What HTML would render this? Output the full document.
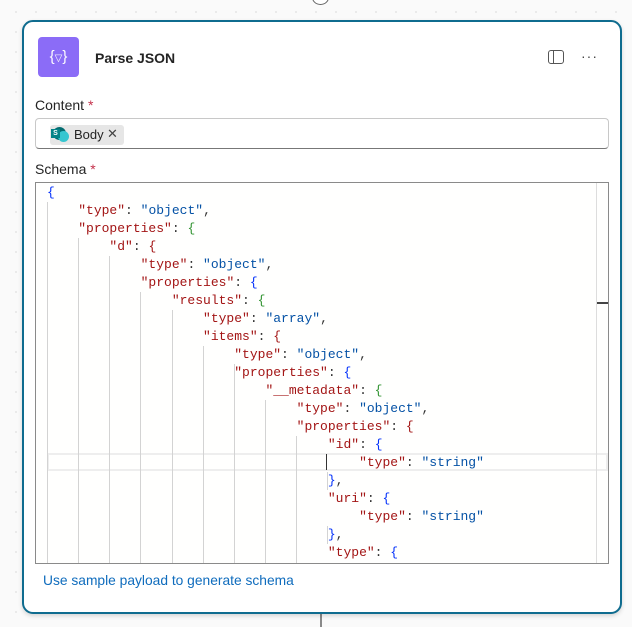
<!DOCTYPE html>
<html><head><style>
*{margin:0;padding:0;box-sizing:border-box}
body{width:632px;height:627px;overflow:hidden;background:#fafafa;background-image:radial-gradient(#e0e0e0 0.7px,transparent 1px);background-size:20px 20px;background-position:6px 2px;font-family:"Liberation Sans",sans-serif;position:relative}
.card{position:absolute;left:22px;top:20px;width:600px;height:594px;border:2px solid #0f6c8f;border-radius:11px;background:#fff;box-shadow:0 2px 4px rgba(0,0,0,.15)}
.abs{position:absolute}
.code{position:absolute;left:35px;top:182px;width:574px;height:382px;border:1px solid #8a8a8a;background:#fffffe;overflow:hidden;font-family:"Liberation Mono",monospace;font-size:13px}
.ln{position:absolute;left:11px;white-space:pre;line-height:18px;height:18px;color:#333}
.k{color:#a31515}.s{color:#0451a5}.b{color:#0431fa}.g{color:#319331}.r{color:#a31515}
.gd{position:absolute;width:1px;background:#d3d3d3}
</style></head><body>
<div class="abs" style="left:312px;top:-10px;width:17px;height:15px;border:1px solid #666;border-radius:50%;background:#fff"></div>
<div class="abs" style="left:320px;top:613px;width:2px;height:14px;background:#8a8a8a"></div>
<div class="card"></div>
<div class="abs" style="left:38px;top:37px;width:41px;height:40px;background:#8b6cf7;border-radius:4px;color:#fff;font-size:15px;text-align:center;line-height:40px">{<span style="font-size:10px">▽</span>}</div>
<div class="abs" style="left:95px;top:50px;font-size:14px;font-weight:bold;color:#242424">Parse JSON</div>
<div class="abs" style="left:548px;top:50px;width:16px;height:14px;border:1.3px solid #555;border-radius:3px"></div>
<div class="abs" style="left:553px;top:51px;width:1.3px;height:12px;background:#555"></div>
<div class="abs" style="left:581px;top:48px;font-size:14px;color:#444;letter-spacing:1px">···</div>
<div class="abs" style="left:35px;top:97px;font-size:14px;color:#242424">Content <span style="color:#c4314b">*</span></div>
<div class="abs" style="left:35px;top:118px;width:574px;height:31px;border:1px solid #c8c8c8;border-bottom-color:#777;border-radius:4px"></div>
<div class="abs" style="left:50px;top:125px;width:74px;height:20px;background:#e6e6e6;border-radius:3px"></div>
<div class="abs" style="left:53px;top:127px;width:13px;height:13px;border-radius:50%;background:#036c70"></div>
<div class="abs" style="left:58px;top:131px;width:11px;height:11px;border-radius:50%;background:#37c6d0"></div>
<div class="abs" style="left:51px;top:129px;width:9px;height:9px;background:#038387;color:#fff;font-size:7px;font-weight:bold;text-align:center;line-height:9px">S</div>
<div class="abs" style="left:74px;top:127px;font-size:13px;color:#242424">Body</div>
<div class="abs" style="left:107px;top:126px;font-size:13px;color:#444">✕</div>
<div class="abs" style="left:35px;top:161px;font-size:14px;color:#242424">Schema <span style="color:#c4314b">*</span></div>
<div class="code">
<div class="abs" style="left:11px;top:270px;width:561px;height:18px;border:2px solid #eee"></div>
<div class="abs" style="left:290px;top:271px;width:1px;height:16px;background:#333"></div>
<div class="gd" style="left:11px;top:19px;height:370px"></div>
<div class="gd" style="left:42px;top:55px;height:330px"></div>
<div class="gd" style="left:73px;top:73px;height:310px"></div>
<div class="gd" style="left:104px;top:109px;height:280px"></div>
<div class="gd" style="left:136px;top:127px;height:260px"></div>
<div class="gd" style="left:167px;top:163px;height:220px"></div>
<div class="gd" style="left:198px;top:181px;height:200px"></div>
<div class="gd" style="left:229px;top:217px;height:170px"></div>
<div class="gd" style="left:260px;top:253px;height:130px"></div>
<div class="gd" style="left:291px;top:289px;height:18px"></div>
<div class="gd" style="left:291px;top:343px;height:18px"></div>
<div class="gd" style="left:560px;top:0;height:382px;background:#ddd"></div>
<div class="abs" style="left:561px;top:119px;width:12px;height:2px;background:#444"></div>
<div class="ln" style="top:1px"><span class="b">{</span></div>
<div class="ln" style="top:19px">    <span class="k">"type"</span>: <span class="s">"object"</span>,</div>
<div class="ln" style="top:37px">    <span class="k">"properties"</span>: <span class="g">{</span></div>
<div class="ln" style="top:55px">        <span class="k">"d"</span>: <span class="r">{</span></div>
<div class="ln" style="top:73px">            <span class="k">"type"</span>: <span class="s">"object"</span>,</div>
<div class="ln" style="top:91px">            <span class="k">"properties"</span>: <span class="b">{</span></div>
<div class="ln" style="top:109px">                <span class="k">"results"</span>: <span class="g">{</span></div>
<div class="ln" style="top:127px">                    <span class="k">"type"</span>: <span class="s">"array"</span>,</div>
<div class="ln" style="top:145px">                    <span class="k">"items"</span>: <span class="r">{</span></div>
<div class="ln" style="top:163px">                        <span class="k">"type"</span>: <span class="s">"object"</span>,</div>
<div class="ln" style="top:181px">                        <span class="k">"properties"</span>: <span class="b">{</span></div>
<div class="ln" style="top:199px">                            <span class="k">"__metadata"</span>: <span class="g">{</span></div>
<div class="ln" style="top:217px">                                <span class="k">"type"</span>: <span class="s">"object"</span>,</div>
<div class="ln" style="top:235px">                                <span class="k">"properties"</span>: <span class="r">{</span></div>
<div class="ln" style="top:253px">                                    <span class="k">"id"</span>: <span class="b">{</span></div>
<div class="ln" style="top:271px">                                        <span class="k">"type"</span>: <span class="s">"string"</span></div>
<div class="ln" style="top:289px">                                    <span class="b">}</span>,</div>
<div class="ln" style="top:307px">                                    <span class="k">"uri"</span>: <span class="b">{</span></div>
<div class="ln" style="top:325px">                                        <span class="k">"type"</span>: <span class="s">"string"</span></div>
<div class="ln" style="top:343px">                                    <span class="b">}</span>,</div>
<div class="ln" style="top:361px">                                    <span class="k">"type"</span>: <span class="b">{</span></div>
</div>
<div class="abs" style="left:43px;top:573px;font-size:13.8px;color:#0f6cbd">Use sample payload to generate schema</div>
</body></html>
